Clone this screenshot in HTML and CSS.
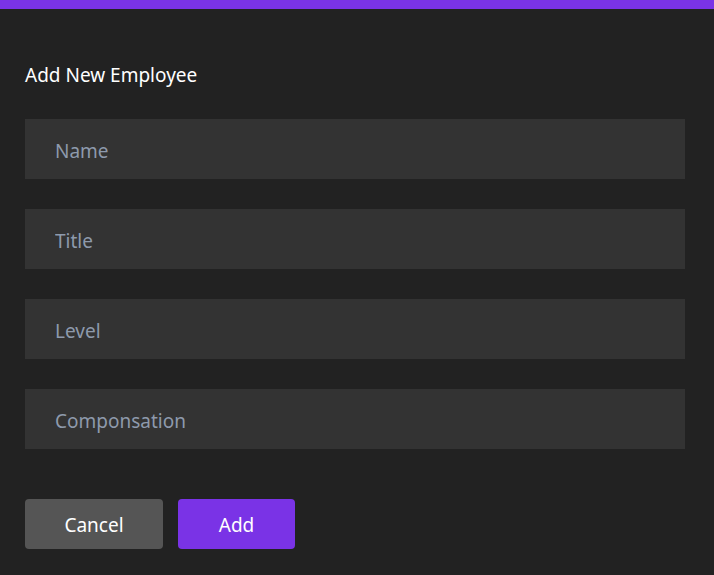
FILE: index.html
```html
<!DOCTYPE html>
<html>
<head>
<meta charset="utf-8">
<link rel="stylesheet" href="styles.css">
</head>
<body>
<div class="topbar"></div>
<main class="form">
  <h1 class="title">Add New Employee</h1>
  <div class="fields">
    <input class="field" type="text" placeholder="Name">
    <input class="field" type="text" placeholder="Title">
    <input class="field" type="text" placeholder="Level">
    <input class="field" type="text" placeholder="Componsation">
  </div>
  <div class="actions">
    <button class="btn btn-cancel">Cancel</button>
    <button class="btn btn-add">Add</button>
  </div>
</main>
</body>
</html>
```
FILE: styles.css
```css
html, body {
  margin: 0;
  padding: 0;
  background: #222222;
  height: 100%;
}
body {
  font-family: "Noto Sans", "Open Sans", sans-serif;
  color: #ffffff;
  overflow: hidden;
}
.topbar {
  height: 9px;
  background: #7a33e6;
}
.form {
  padding: 0 25px;
  width: 660px;
}
.title {
  margin: 54px 0 32px;
  font-size: 19px;
  line-height: 24px;
  font-weight: 400;
  color: #ffffff;
}
.fields {
  display: flex;
  flex-direction: column;
  gap: 30px;
}
.field {
  box-sizing: border-box;
  width: 660px;
  height: 60px;
  margin: 0;
  border: none;
  outline: none;
  background: #333333;
  padding: 3px 30px 0;
  font-family: inherit;
  font-size: 19px;
  color: #ffffff;
}
.field::placeholder {
  color: #8e9aac;
}
.actions {
  display: flex;
  gap: 15px;
  margin-top: 50px;
}
.btn {
  height: 50px;
  border: none;
  border-radius: 4px;
  font-family: inherit;
  font-size: 19px;
  color: #ffffff;
  padding: 2px 0 0;
}
.btn-cancel {
  width: 138px;
  background: #555555;
}
.btn-add {
  width: 117px;
  background: #7a33e6;
}
```
